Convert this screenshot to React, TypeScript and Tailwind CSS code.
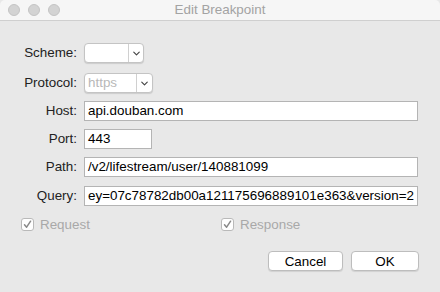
import { ChevronDown } from 'lucide-react';

const font = { fontFamily: '"Liberation Sans", Arial, sans-serif' };

const Row = ({ label, children, className }: { label: string; children: React.ReactNode; className?: string }) => (
  <div className={`flex items-center h-[20px] ${className ?? ''}`}>
    <div className="w-[78px] pr-[1px] text-right text-[13.4px] leading-[20px] text-[#222]">{label}</div>
    <div className="ml-[6px] flex items-center h-full">{children}</div>
  </div>
);

const Field = ({ value, width }: { value: string; width: string }) => (
  <div
    className={`${width} h-[20px] bg-white border border-[#b4b4b4] pl-[3px] text-[13.4px] leading-[18px] text-black overflow-hidden whitespace-nowrap`}
  >
    {value}
  </div>
);

const Popup = ({ value, width, divider }: { value?: string; width: string; divider: string }) => (
  <div
    className={`${width} h-[20px] flex bg-white border border-[#c4c4c4] rounded-[4px] shadow-[0_1px_1px_rgba(0,0,0,0.12)] overflow-hidden`}
  >
    <div className={`${divider} pl-[3px] text-[13.4px] leading-[18px] text-[#b8b8b8] border-r border-[#d0d0d0]`}>
      {value}
    </div>
    <div className="flex-1 flex items-center justify-center">
      <ChevronDown size={11} strokeWidth={2.5} className="text-[#444]" />
    </div>
  </div>
);

const Check = ({ label }: { label: string }) => (
  <div className="flex items-center gap-[6px] h-[13px]">
    <div className="w-[13px] h-[13px] bg-white border border-[#b9b9b9] rounded-[3px] flex items-center justify-center">
      <svg width="9" height="9" viewBox="0 0 9 9">
        <path d="M1.5 4.8 L3.6 7.2 L7.6 1.2" fill="none" stroke="#8a8a8a" strokeWidth="1.5" strokeLinecap="round" strokeLinejoin="round" />
      </svg>
    </div>
    <span className="text-[13.4px] leading-[13px] text-[#a8a8a8]">{label}</span>
  </div>
);

const App = () => {
  return (
    <div style={font} className="w-[440px] h-[292px] bg-[#e8e8e8] flex flex-col overflow-hidden">
      <div className="h-[21px] bg-[#f6f6f6] border-b border-[#cfcfcf] flex items-center relative rounded-t-[5px]">
        <div className="flex gap-[8px] pl-[8px]">
          <div className="w-[12px] h-[12px] rounded-full bg-[#d3d3d3] border border-[#c4c4c4]" />
          <div className="w-[12px] h-[12px] rounded-full bg-[#d3d3d3] border border-[#c4c4c4]" />
          <div className="w-[12px] h-[12px] rounded-full bg-[#d3d3d3] border border-[#c4c4c4]" />
        </div>
        <div className="absolute inset-0 flex items-center justify-center text-[13.4px] text-[#a3a3a3]">Edit Breakpoint</div>
      </div>

      <div className="flex flex-col pt-[22px]">
        <Row label="Scheme:">
          <Popup width="w-[60px]" divider="w-[44px]" />
        </Row>
        <Row label="Protocol:" className="mt-[10px]">
          <Popup value="https" width="w-[69px]" divider="w-[52px]" />
        </Row>
        <Row label="Host:" className="mt-[8px]">
          <Field value="api.douban.com" width="w-[334px]" />
        </Row>
        <Row label="Port:" className="mt-[8px]">
          <Field value="443" width="w-[68px]" />
        </Row>
        <Row label="Path:" className="mt-[8px]">
          <Field value="/v2/lifestream/user/140881099" width="w-[334px]" />
        </Row>
        <Row label="Query:" className="mt-[9px]">
          <Field value="ey=07c78782db00a121175696889101e363&version=2" width="w-[334px]" />
        </Row>

        <div className="flex mt-[12px] h-[13px] pl-[21px]">
          <div className="w-[200px]">
            <Check label="Request" />
          </div>
          <Check label="Response" />
        </div>

        <div className="flex justify-end gap-[8px] pr-[21px] mt-[20px]">
          <button className="w-[75px] h-[20px] bg-white border border-[#bdbdbd] rounded-[4px] shadow-[0_1px_1px_rgba(0,0,0,0.1)] text-[13.4px] text-black">
            Cancel
          </button>
          <button className="w-[68px] h-[20px] bg-white border border-[#bdbdbd] rounded-[4px] shadow-[0_1px_1px_rgba(0,0,0,0.1)] text-[13.4px] text-black">
            OK
          </button>
        </div>
      </div>
    </div>
  );
};

export default App;
